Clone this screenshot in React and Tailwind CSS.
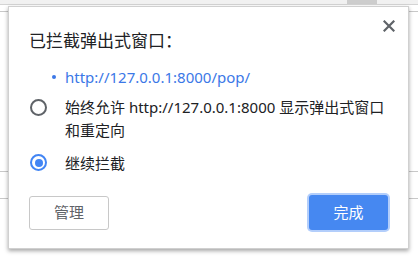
import React from "react";

const font = { fontFamily: '"Noto Sans", "Noto Sans CJK SC", sans-serif' };

function CloseIcon() {
  return (
    <svg width="12" height="12" viewBox="0 0 12 12" className="text-[#5f6368]">
      <path d="M1.5 1.5 L10.5 10.5 M10.5 1.5 L1.5 10.5" stroke="currentColor" strokeWidth="2.2" strokeLinecap="square" />
    </svg>
  );
}

function Radio({ checked }) {
  return checked ? (
    <span className="block w-[17px] h-[17px] rounded-full border-2 border-[#4285f4] flex items-center justify-center shrink-0">
      <span className="block w-[8px] h-[8px] rounded-full bg-[#4285f4]" />
    </span>
  ) : (
    <span className="block w-[17px] h-[17px] rounded-full border-2 border-[#5f6368] shrink-0" />
  );
}

export default function App() {
  return (
    <div className="relative w-[418px] h-[261px] bg-white overflow-hidden" style={font}>
      {/* page behind the bubble */}
      <div className="flex flex-col">
        <div className="h-[5px] bg-[#f1f1f1] border-b border-[#d4d4d4] flex">
          <div className="ml-[347px] w-[30px] bg-[#cdcdcd]" />
        </div>
        <div className="h-[7px] border-b border-[#c8c8c8]" />
        <div className="h-[160px] border-b border-[#c8c8c8]" />
        <div className="h-[27px] border-b border-[#c8c8c8]" />
      </div>

      {/* popup blocked bubble */}
      <div className="absolute left-[8px] top-[6px] w-[401px] h-[243px] bg-white border border-[#d0d0d0] shadow-[0_2px_4px_rgba(0,0,0,0.35)] flex flex-col pl-[21px] pr-[19px]">
        <button className="absolute top-[13px] right-[13px] p-0">
          <CloseIcon />
        </button>

        <div className="pt-[22px] ml-[-1px] text-[17px] leading-[24px] text-[#202124]">已拦截弹出式窗口：</div>

        <div className="mt-[14px] flex items-center h-[20px] text-[15px] leading-[20px]">
          <span className="ml-[22px] w-[4px] h-[4px] rounded-full bg-[#3b78e7]" />
          <span className="ml-[9px] text-[#3b78e7]">http://127.0.0.1:8000/pop/</span>
        </div>

        <div className="mt-[9px] flex items-start">
          <div className="mt-[3px]">
            <Radio />
          </div>
          <div className="ml-[18px] text-[15px] leading-[23px] text-[#202124] whitespace-nowrap">
            始终允许 http://127.0.0.1:8000 显示弹出式窗口
            <br />
            和重定向
          </div>
        </div>

        <div className="mt-[8px] flex items-center">
          <Radio checked />
          <div className="ml-[18px] text-[15px] leading-[23px] text-[#202124] mt-[2px]">继续拦截</div>
        </div>

        <div className="mt-auto mb-[18px] flex items-center justify-between">
          <button className="ml-[-1px] w-[80px] h-[34px] rounded-[3px] border border-[#c8c8c8] bg-white text-[15px] text-[#5f6368]">
            管理
          </button>
          <button className="mr-[1px] w-[79px] h-[35px] rounded-[3px] bg-[#4688f1] text-[15px] text-white ring-2 ring-[#b3cefb]">
            完成
          </button>
        </div>
      </div>
    </div>
  );
}
